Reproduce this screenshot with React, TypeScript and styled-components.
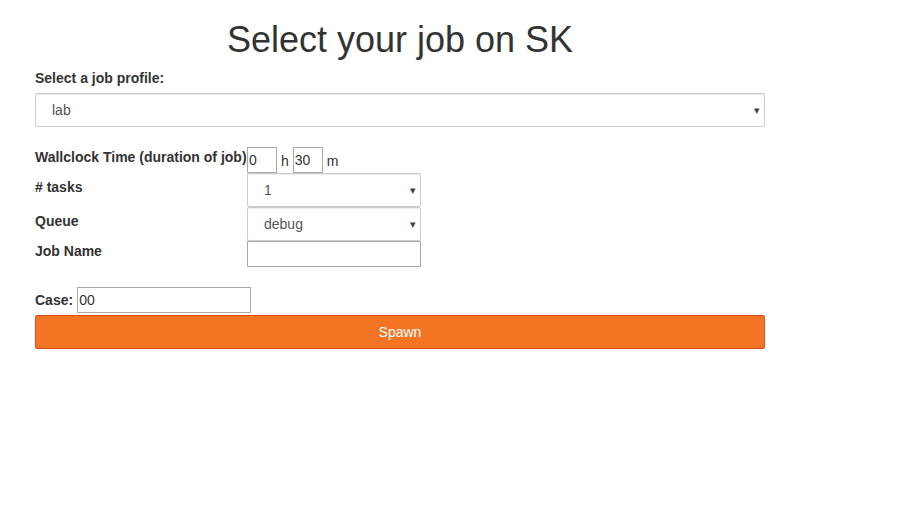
import React, { useState } from 'react'
import styled, { createGlobalStyle } from 'styled-components'

const GlobalStyle = createGlobalStyle`
  body {
    margin: 0;
    font-family: 'Liberation Sans', Arial, sans-serif;
    font-size: 14px;
    line-height: 20px;
    color: #333;
    background: #fff;
  }
`

export default function App() {
  const [profile, setProfile] = useState('lab')
  const [hours, setHours] = useState('0')
  const [minutes, setMinutes] = useState('30')
  const [tasks, setTasks] = useState('1')
  const [queue, setQueue] = useState('debug')
  const [jobName, setJobName] = useState('')
  const [caseId, setCaseId] = useState('00')

  return (
    <Page>
      <GlobalStyle />
      <Title>Select your job on SK</Title>
      <Label htmlFor="profile">Select a job profile:</Label>
      <SelectWrap>
        <Select id="profile" value={profile} onChange={(e) => setProfile(e.target.value)}>
          <option value="lab">lab</option>
          <option value="notebook">notebook</option>
        </Select>
        <Caret>▾</Caret>
      </SelectWrap>

      <Options>
        <Row>
          <RowLabel>Wallclock Time (duration of job)</RowLabel>
          <Inline>
            <SmallInput value={hours} onChange={(e) => setHours(e.target.value)} />
            <Unit>h</Unit>
            <SmallInput value={minutes} onChange={(e) => setMinutes(e.target.value)} />
            <Unit>m</Unit>
          </Inline>
        </Row>
        <Row>
          <RowLabel $offset={4}># tasks</RowLabel>
          <SelectWrap $width={174}>
            <Select value={tasks} onChange={(e) => setTasks(e.target.value)}>
              <option value="1">1</option>
              <option value="2">2</option>
              <option value="4">4</option>
            </Select>
            <Caret>▾</Caret>
          </SelectWrap>
        </Row>
        <Row>
          <RowLabel $offset={4}>Queue</RowLabel>
          <SelectWrap $width={174}>
            <Select value={queue} onChange={(e) => setQueue(e.target.value)}>
              <option value="debug">debug</option>
              <option value="normal">normal</option>
            </Select>
            <Caret>▾</Caret>
          </SelectWrap>
        </Row>
        <Row>
          <RowLabel>Job Name</RowLabel>
          <TextInput value={jobName} onChange={(e) => setJobName(e.target.value)} />
        </Row>
      </Options>

      <CaseRow>
        <CaseLabel>Case:</CaseLabel>
        <TextInput value={caseId} onChange={(e) => setCaseId(e.target.value)} />
      </CaseRow>
      <SpawnButton type="submit">Spawn</SpawnButton>
    </Page>
  )
}

const Page = styled.div`
  width: 730px;
  padding: 20px 0 0 35px;
  display: flex;
  flex-direction: column;
  align-items: flex-start;
`
const Title = styled.h1`
  align-self: stretch;
  margin: 0 0 8px;
  font-size: 36px;
  font-weight: 500;
  line-height: 40px;
  text-align: center;
  color: #333;
`
const Label = styled.label`
  font-weight: bold;
  margin-bottom: 5px;
`
const SelectWrap = styled.div<{ $width?: number }>`
  position: relative;
  width: ${(p) => (p.$width ? `${p.$width}px` : '100%')};
`
const Select = styled.select`
  appearance: none;
  -webkit-appearance: none;
  display: block;
  width: 100%;
  height: 34px;
  padding: 6px 16px;
  font-family: inherit;
  font-size: 14px;
  color: #555;
  background: #fff;
  border: 1px solid #ccc;
  border-radius: 2px;
  box-shadow: inset 0 1px 1px rgba(0, 0, 0, 0.075);
  outline: none;
`
const Caret = styled.span`
  position: absolute;
  right: 5px;
  top: 7px;
  font-size: 11px;
  color: #444;
  pointer-events: none;
`
const Options = styled.div`
  margin-top: 20px;
  display: flex;
  flex-direction: column;
`
const Row = styled.div`
  display: flex;
  align-items: flex-start;
`
const RowLabel = styled.label<{ $offset?: number }>`
  width: 212px;
  font-weight: bold;
  white-space: nowrap;
  padding-top: ${(p) => p.$offset || 0}px;
`
const Inline = styled.div`
  display: flex;
  align-items: center;
`
const SmallInput = styled.input`
  box-sizing: border-box;
  width: 30px;
  height: 26px;
  padding: 1px;
  font-family: inherit;
  font-size: 14px;
  color: #333;
  border: 1px solid #a9a9a9;
  border-radius: 0;
  outline: none;
`
const Unit = styled.span`
  padding: 2px 4px 0;
`
const TextInput = styled.input`
  box-sizing: border-box;
  width: 174px;
  height: 26px;
  padding: 1px;
  font-family: inherit;
  font-size: 14px;
  color: #333;
  border: 1px solid #a9a9a9;
  border-radius: 0;
  outline: none;
`
const CaseRow = styled.div`
  margin-top: 20px;
  display: flex;
  align-items: center;
  gap: 4px;
`
const CaseLabel = styled.label`
  font-weight: bold;
`
const SpawnButton = styled.button`
  margin-top: 2px;
  width: 730px;
  height: 34px;
  font-family: inherit;
  font-size: 14px;
  color: #fff;
  background: #f37524;
  border: 1px solid #e34f21;
  border-radius: 2px;
  cursor: pointer;
`
